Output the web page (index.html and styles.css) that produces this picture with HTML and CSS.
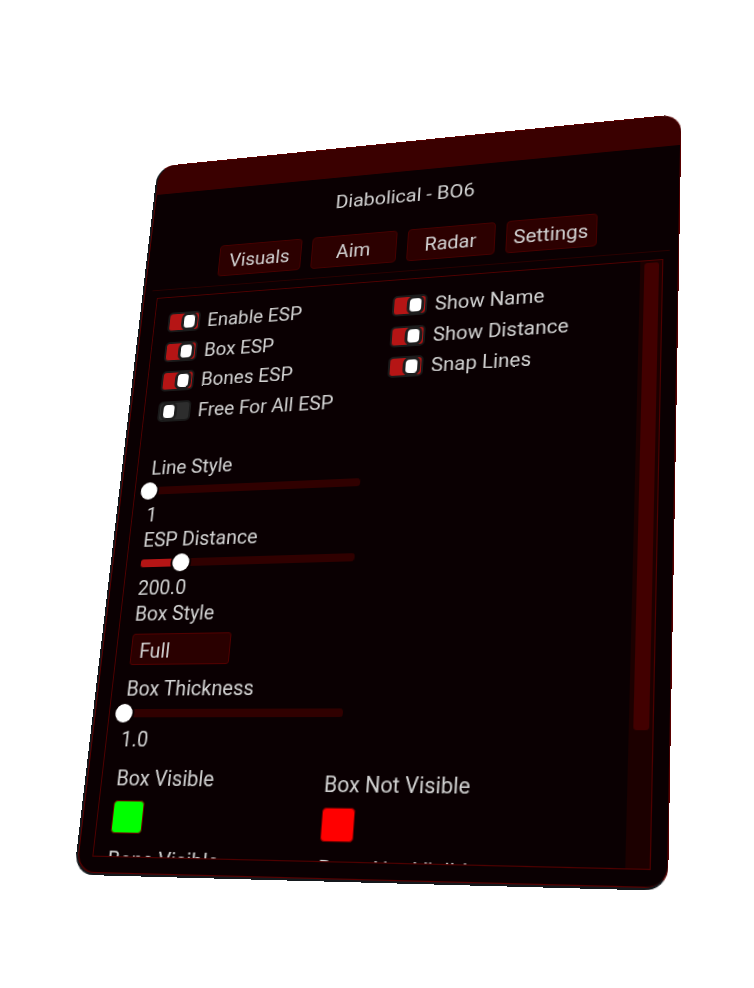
FILE: index.html

```html
<!DOCTYPE html>
<html lang="en">
<head>
  <meta charset="UTF-8" />
  <title>Diabolical - BO6</title>
  <link rel="stylesheet" href="styles.css">
</head>
<body>

<div class="panel">
  <div class="titlebar"></div>
  <div class="title">Diabolical - BO6</div>

  <div class="tabs">
    <button class="tab">Visuals</button>
    <button class="tab">Aim</button>
    <button class="tab">Radar</button>
    <button class="tab">Settings</button>
  </div>

  <div class="frame">
    <div class="content">
      <div class="checks">
        <div class="check-col">
          <div class="check"><span class="toggle on"><i></i></span>Enable ESP</div>
          <div class="check"><span class="toggle on"><i></i></span>Box ESP</div>
          <div class="check"><span class="toggle on"><i></i></span>Bones ESP</div>
          <div class="check"><span class="toggle"><i></i></span>Free For All ESP</div>
        </div>
        <div class="check-col">
          <div class="check"><span class="toggle on"><i></i></span>Show Name</div>
          <div class="check"><span class="toggle on"><i></i></span>Show Distance</div>
          <div class="check"><span class="toggle on"><i></i></span>Snap Lines</div>
        </div>
      </div>

      <div class="field">
        <div class="label">Line Style</div>
        <div class="slider"><div class="slider-fill" style="width: 0%"><i></i></div></div>
        <div class="value">1</div>
      </div>
      <div class="field">
        <div class="label">ESP Distance</div>
        <div class="slider"><div class="slider-fill" style="width: 19.5%"><i></i></div></div>
        <div class="value">200.0</div>
      </div>

      <div class="label">Box Style</div>
      <div class="dropdown">Full</div>

      <div class="field">
        <div class="label">Box Thickness</div>
        <div class="slider"><div class="slider-fill" style="width: 0%"><i></i></div></div>
        <div class="value">1.0</div>
      </div>

      <div class="colors">
        <div class="color">
          <div class="label">Box Visible</div>
          <div class="swatch green"></div>
          <div class="label next">Bone Visible</div>
        </div>
        <div class="color low">
          <div class="label">Box Not Visible</div>
          <div class="swatch red"></div>
          <div class="label next">Bone Not Visible</div>
        </div>
      </div>
    </div>
    <div class="scrollbar"><div class="scroll-thumb"></div></div>
  </div>
</div>

</body>
</html>
```

FILE: styles.css

```css
html, body {
  margin: 0;
  padding: 0;
  height: 988px;
  background: #fff;
  overflow: hidden;
}
.panel {
  width: 560px;
  height: 742px;
  box-sizing: border-box;
  display: flex;
  flex-direction: column;
  background: #0a0002;
  border: 1px solid #5a0000;
  border-left: 2px solid #14181c;
  border-bottom: 2px solid #14181c;
  border-radius: 20px;
  box-shadow: inset 1px -1px 0 #5a0000;
  font-family: Roboto, "Liberation Sans", sans-serif;
  font-size: 20.5px;
  line-height: 24px;
  color: #d2d2d2;
  overflow: hidden;
  transform-origin: 0 0;
  transform: matrix3d(0.8305, -0.111813, 0, -0.00015415, -0.124970, 0.812784, 0, -0.00016192, 0, 0, 1, 0, 157.7, 166.5, 0, 1);
}
.titlebar {
  height: 33px;
  flex: none;
  background: #3a0000;
}
.title {
  margin-top: 16px;
  text-align: center;
  font-size: 21px;
}
.tabs {
  display: flex;
  justify-content: center;
  gap: 11px;
  margin: 26px 8px 0 9px;
  padding-bottom: 10px;
  border-bottom: 1px solid #2a0000;
}
.tab {
  width: 91px;
  height: 35px;
  padding: 0;
  background: #2c0000;
  border: 1px solid #470000;
  border-radius: 4px;
  color: inherit;
  font: inherit;
}
.frame {
  flex: 1;
  display: flex;
  min-height: 0;
  margin: 8px 14px 15px 15px;
  border: 1px solid #500000;
}
.content {
  flex: 1;
  min-width: 0;
  padding: 17px 15px 0;
  overflow: hidden;
}
.checks {
  display: flex;
  margin-bottom: 37px;
}
.check-col {
  flex: none;
  width: 243px;
  display: flex;
  flex-direction: column;
  gap: 10.6px;
}
.check {
  height: 22px;
  display: flex;
  align-items: center;
  gap: 8px;
  white-space: nowrap;
}
.toggle {
  width: 36px;
  height: 22px;
  box-sizing: border-box;
  padding: 2px 4px;
  display: flex;
  background: #2d2d2d;
  border: 2px solid #1a1a1a;
  border-radius: 5px;
}
.toggle.on {
  justify-content: flex-end;
  background: #b51515;
}
.toggle i {
  width: 12px;
  height: 14px;
  background: #fff;
  border-radius: 4px;
  box-shadow: 0 0 0 3px #1e1e1e;
}
.field {
  display: flex;
  flex-direction: column;
  margin-bottom: 2px;
}
.slider {
  height: 8px;
  width: 223px;
  margin: 8px 0;
  background: #300000;
  border-radius: 3px;
}
.slider-fill {
  position: relative;
  height: 8px;
  background: #b51515;
  border-radius: 3px;
}
.slider-fill i {
  position: absolute;
  right: -9px;
  top: -5px;
  width: 18px;
  height: 18px;
  background: #fff;
  border-radius: 50%;
  box-shadow: 0 0 0 2px #0a0002;
}
.value {
  margin-top: 1px;
}
.dropdown {
  width: 104px;
  height: 31px;
  box-sizing: border-box;
  margin: 8px 0 11px;
  padding: 4px 8px;
  background: #2a0000;
  border: 1px solid #520000;
  border-radius: 3px;
}
.colors {
  display: flex;
  margin-top: 13px;
}
.color {
  width: 210px;
  flex: none;
}
.color.low {
  padding-top: 4px;
}
.swatch {
  width: 32px;
  height: 31px;
  box-sizing: border-box;
  margin-top: 9px;
  border: 1px solid #700000;
  border-radius: 4px;
}
.swatch.green {
  background: #00ff00;
}
.swatch.red {
  background: #ff0000;
}
.label.next {
  margin-top: 12px;
}
.scrollbar {
  width: 21px;
  flex: none;
  box-sizing: border-box;
  padding: 2px 3px 0 4px;
  background: #1c0000;
}
.scroll-thumb {
  height: 448px;
  background: #420000;
  border-radius: 3px;
}
```
